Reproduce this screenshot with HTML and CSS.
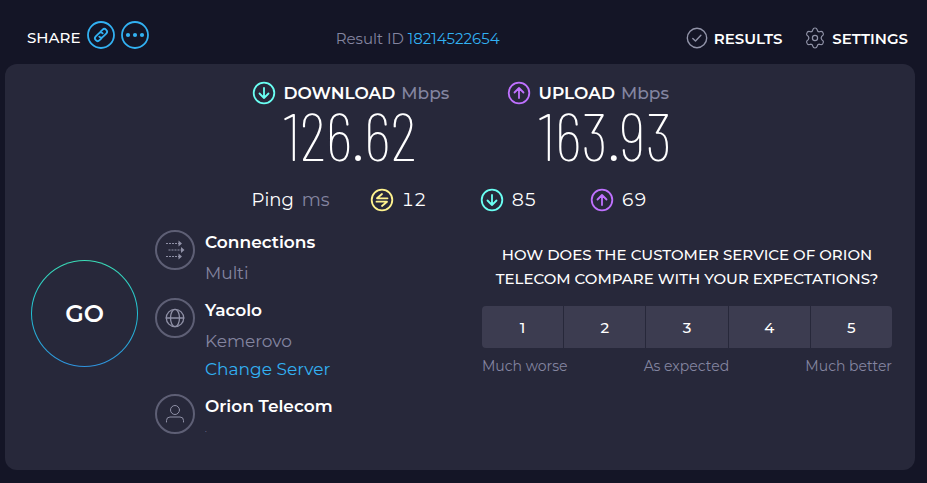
FILE: index.html
```html
<!DOCTYPE html>
<html lang="en">
<head>
<meta charset="UTF-8">
<meta name="viewport" content="width=device-width, initial-scale=1.0">
<title>Speed test result</title>
<link rel="stylesheet" href="styles.css">
</head>
<body>
<!-- shared arrows -->
<svg class="sprite" aria-hidden="true">
  <symbol id="down" viewBox="0 0 24 24">
    <circle cx="12" cy="12" r="10.3"/>
    <path d="M12 7v10M7.500 12.500L12 17l4.500-4.500"/>
  </symbol>
  <symbol id="up" viewBox="0 0 24 24">
    <circle cx="12" cy="12" r="10.3"/>
    <path d="M12 17V7M7.500 11.500L12 7l4.500 4.500"/>
  </symbol>
</svg>

<header class="header">
  <div class="share">
    <span class="share-label">SHARE</span>
    <button class="share-btn" aria-label="Copy link">
      <svg viewBox="0 0 28 28">
        <circle cx="14" cy="14" r="13"/>
        <g transform="rotate(-45 14 14)">
          <path d="M12 16.700H9.300a2.700 2.700 0 0 1 0-5.400h4.400a2.700 2.700 0 0 1 2.700 2.700"/>
          <path d="M16 11.300h2.700a2.700 2.700 0 0 1 0 5.400h-4.400a2.700 2.700 0 0 1-2.700-2.700"/>
        </g>
      </svg>
    </button>
    <button class="share-btn" aria-label="More">
      <svg viewBox="0 0 28 28">
        <circle cx="14" cy="14" r="13"/>
        <g class="dots">
          <circle cx="7" cy="14" r="2.1"/>
          <circle cx="14" cy="14" r="2.1"/>
          <circle cx="21" cy="14" r="2.1"/>
        </g>
      </svg>
    </button>
  </div>
  <div class="result-id">Result ID <a href="#">18214522654</a></div>
  <nav class="nav">
    <a href="#">
      <svg viewBox="0 0 22 22">
        <circle cx="11" cy="11" r="9.7"/>
        <path d="M6.800 11.500l2.700 2.600 5.400-5.800"/>
      </svg>
      RESULTS
    </a>
    <a href="#">
      <svg class="gear" viewBox="0 0 22 22">
        <circle cx="11" cy="11" r="2.6"/>
        <path d="M8.900 2.600Q9.200 1 11 1t2.100 1.600q.4 2.300 2.200 2.200 2.400-.9 3.400.4 1.200 1.900.4 2.900l-1.400 1.300q-1.200 1.600 0 3.200l1.400 1.300q.8 1-.4 2.900-1 1.300-3.400.4-1.800-.1-2.200 2.200Q12.800 21 11 21t-2.100-1.600q-.4-2.300-2.200-2.200-2.400.9-3.400-.4-1.200-1.900-.4-2.900l1.400-1.300q1.200-1.600 0-3.200L2.900 8.100q-.8-1 .4-2.900 1-1.300 3.400-.4 1.800.1 2.200-2.200z"/>
      </svg>
      SETTINGS
    </a>
  </nav>
</header>

<main class="panel">
  <section class="speeds">
    <div class="speed">
      <h2><svg class="icon teal"><use href="#down"/></svg>DOWNLOAD <small>Mbps</small></h2>
      <div class="number">126.62</div>
    </div>
    <div class="speed">
      <h2><svg class="icon purple"><use href="#up"/></svg>UPLOAD <small>Mbps</small></h2>
      <div class="number">163.93</div>
    </div>
  </section>

  <section class="pings">
    <div class="ping">Ping <span class="unit">ms</span></div>
    <div class="ping">
      <svg class="icon yellow" viewBox="0 0 24 24">
        <circle cx="12" cy="12" r="10.3"/>
        <path d="M17.500 10.300H7l5-4.300M6.500 13.700H17L12 18"/>
      </svg>
      12
    </div>
    <div class="ping"><svg class="icon teal"><use href="#down"/></svg>85</div>
    <div class="ping"><svg class="icon purple"><use href="#up"/></svg>69</div>
  </section>

  <div class="bottom">
    <button class="go">GO</button>

    <div class="info">
      <div class="info-item">
        <svg class="info-icon" viewBox="0 0 40 40">
          <circle class="ring" cx="20" cy="20" r="19"/>
          <path class="dashes" d="M11 13.500h13M13.500 20h13M11 26.500h13"/>
          <path class="heads" d="M23.500 10.500l3.500 3-3.500 3zM26 17l3.500 3-3.500 3zM23.500 23.500l3.500 3-3.500 3z"/>
        </svg>
        <div>
          <h3>Connections</h3>
          <p>Multi</p>
        </div>
      </div>
      <div class="info-item">
        <svg class="info-icon" viewBox="0 0 40 40">
          <circle class="ring" cx="20" cy="20" r="19"/>
          <g class="globe">
            <circle cx="20" cy="20" r="8.700"/>
            <ellipse cx="20" cy="20" rx="4.500" ry="8.700"/>
            <path d="M11.300 20h17.400"/>
          </g>
        </svg>
        <div>
          <h3>Yacolo</h3>
          <p>Kemerovo</p>
          <a href="#">Change Server</a>
        </div>
      </div>
      <div class="info-item">
        <svg class="info-icon" viewBox="0 0 40 40">
          <circle class="ring" cx="20" cy="20" r="19"/>
          <circle cx="20" cy="16" r="4.500"/>
          <path d="M11.500 28v-1.500a3.500 3.500 0 0 1 3.500-3.500h10a3.500 3.500 0 0 1 3.500 3.500V28"/>
        </svg>
        <div>
          <h3>Orion Telecom</h3>
          <p class="tiny">.</p>
        </div>
      </div>
    </div>

    <section class="survey">
      <h4>HOW DOES THE CUSTOMER SERVICE OF ORION TELECOM COMPARE WITH YOUR EXPECTATIONS?</h4>
      <div class="rating">
        <button>1</button>
        <button>2</button>
        <button>3</button>
        <button>4</button>
        <button>5</button>
      </div>
      <div class="scale">
        <span>Much worse</span>
        <span>As expected</span>
        <span>Much better</span>
      </div>
    </section>
  </div>
</main>
</body>
</html>
```

FILE: styles.css
```css
* {
  box-sizing: border-box;
}
body {
  margin: 0;
  padding: 0 12px 12px 5px;
  background-color: #141526;
  color: #fff;
  font-family: Montserrat, Inter, sans-serif;
  font-size: 17px;
}
h2, h3, h4, p {
  margin: 0;
  font-weight: 500;
}
a {
  color: #32b1f2;
  text-decoration: none;
}
button {
  border: 0;
  padding: 0;
  background: none;
  color: inherit;
  font-family: inherit;
  cursor: pointer;
}
svg {
  flex: none;
  fill: none;
  stroke: currentColor;
  stroke-linecap: round;
  stroke-linejoin: round;
}
.sprite {
  display: none;
}

/* header */
.header {
  display: flex;
  justify-content: space-between;
  align-items: center;
  height: 64px;
  padding: 12px 7px 0 22px;
  font-size: 15px;
}
.share {
  display: flex;
  align-items: center;
  gap: 6px;
  padding-bottom: 6px;
}
.share-label {
  padding-top: 5px;
  padding-right: 1px;
  font-weight: 500;
}
.share-btn {
  height: 28px;
  color: #32b1f2;
}
.share-btn svg {
  width: 28px;
  height: 28px;
  stroke-width: 1.8;
}
.dots {
  fill: currentColor;
  stroke: none;
}
.result-id {
  color: #8485a0;
}
.nav {
  display: flex;
  gap: 22px;
}
.nav a {
  display: flex;
  align-items: center;
  gap: 6px;
  color: #fff;
  font-weight: 600;
}
.nav svg {
  width: 22px;
  height: 22px;
  color: #9193a8;
  stroke-width: 1.4;
}
.nav .gear {
  stroke-width: 1.2;
}

/* panel */
.panel {
  padding: 16px 23px 35px 26px;
  border-radius: 12px;
  background-color: #27283a;
}
.icon {
  width: 24px;
  height: 24px;
  stroke-width: 1.8;
}
.teal {
  color: #6afff3;
}
.purple {
  color: #bf71ff;
}
.yellow {
  color: #fff38e;
}
.speeds {
  display: grid;
  grid-template-columns: 255px 165px;
  justify-content: center;
}
.speed h2 {
  display: flex;
  align-items: center;
  gap: 6px;
  height: 26px;
  font-size: 17px;
  font-weight: 600;
  white-space: nowrap;
}
.speed .icon {
  margin-right: 2px;
}
.speed small {
  color: #8485a0;
  font-size: 17px;
  font-weight: 500;
}
.number {
  padding-left: 32px;
  padding-bottom: 8px;
  font-family: "Barlow Condensed", "Roboto Condensed", Roboto, sans-serif;
  font-size: 68px;
  font-weight: 200;
  line-height: 56px;
}
.pings {
  display: grid;
  grid-template-columns: 118px 110px 110px 82px;
  justify-content: center;
  padding-top: 17px;
  font-size: 18px;
  font-variant-numeric: tabular-nums;
}
.ping {
  display: flex;
  align-items: center;
  gap: 8px;
  height: 26px;
}
.unit {
  color: #8485a0;
}

/* bottom row */
.bottom {
  display: grid;
  grid-template-columns: 107px 1fr 410px;
  column-gap: 17px;
  padding-top: 17px;
}
.go {
  width: 107px;
  height: 107px;
  margin-top: 30px;
  border: 1px solid transparent;
  border-radius: 50%;
  background: linear-gradient(#27283a, #27283a) padding-box, linear-gradient(#3be0b8, #22bfd3, #2f94e0) border-box;
  font-size: 24px;
  font-weight: 600;
}
.info {
  display: flex;
  flex-direction: column;
  gap: 11px;
}
.info-item {
  display: flex;
  gap: 10px;
}
.info-icon {
  width: 40px;
  height: 40px;
  color: #8f90a6;
}
.info-icon .ring {
  stroke: #5e5f75;
  stroke-width: 2;
}
.dashes {
  stroke-dasharray: 2 1;
  stroke-linecap: butt;
}
.heads {
  fill: currentColor;
  stroke: none;
}
.globe {
  stroke-width: 1.3;
}
.globe path {
  stroke-width: 1.6;
}
.info h3 {
  margin-bottom: 5px;
  font-size: 17px;
  font-weight: 600;
  line-height: 24px;
}
.info p {
  color: #8485a0;
  font-weight: 400;
  line-height: 28px;
}
.info a {
  display: block;
  line-height: 28px;
}
.info .tiny {
  font-size: 8px;
  line-height: 12px;
}
.survey {
  padding-top: 13px;
}
.survey h4 {
  font-size: 15px;
  line-height: 24px;
  text-align: center;
}
.rating {
  display: grid;
  grid-template-columns: repeat(5, 1fr);
  gap: 1px;
  margin-top: 15px;
  border-radius: 4px;
  overflow: hidden;
}
.rating button {
  height: 42px;
  background-color: #3c3c50;
  font-size: 15px;
  font-weight: 500;
}
.scale {
  display: flex;
  justify-content: space-between;
  margin-top: 8px;
  color: #8485a0;
  font-size: 14px;
  line-height: 20px;
}
```
